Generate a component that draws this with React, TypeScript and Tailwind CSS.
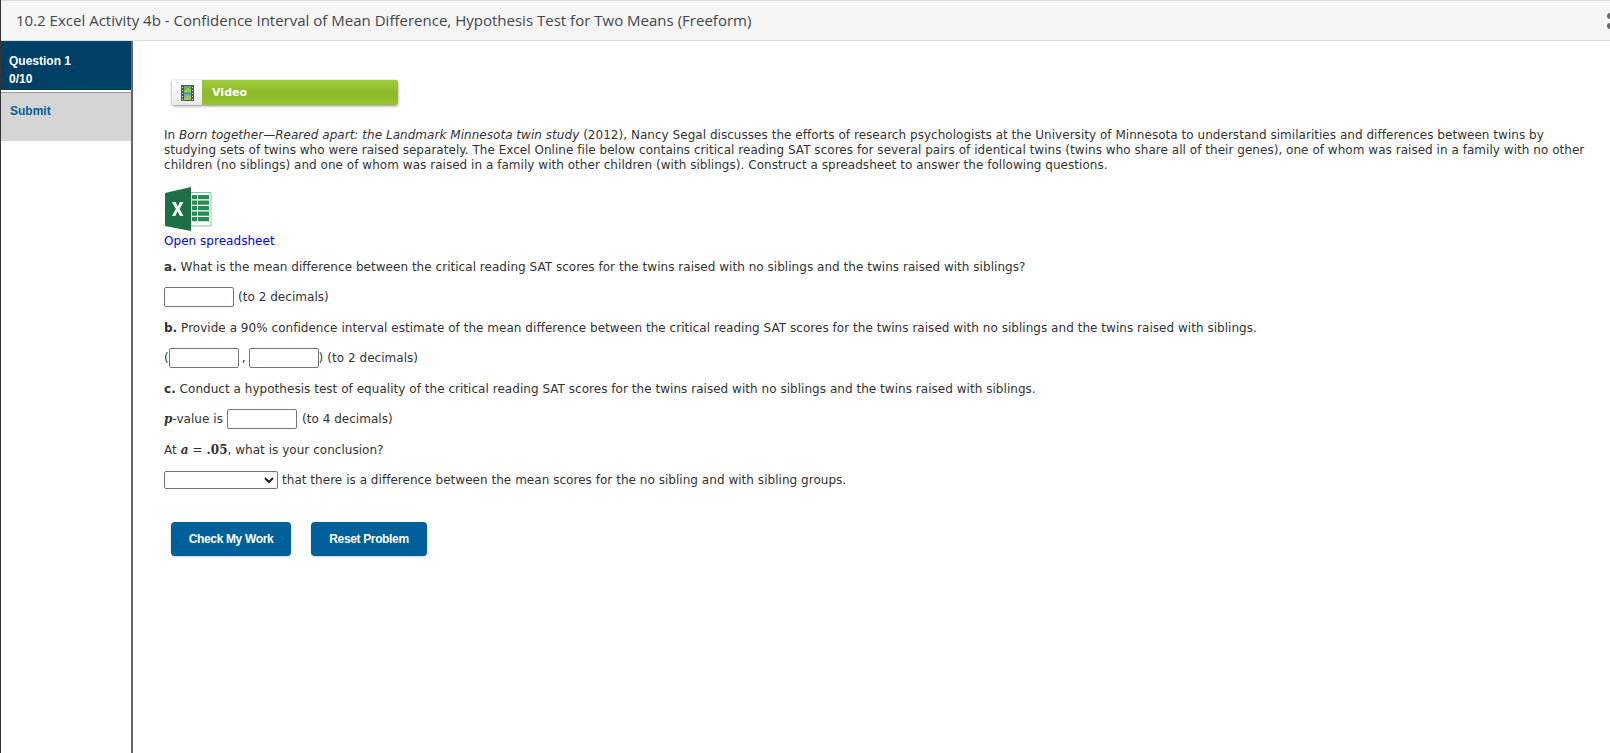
export default function App() {
  const body = "font-['DejaVu_Sans',sans-serif] text-[12px] leading-[15px] tracking-[0.035px] text-[#333]";
  const inputBox = "inline-block w-[70px] h-[20px] bg-white border border-[#767676] rounded-[2px] align-middle";
  const math = "font-['DejaVu_Serif',serif] font-bold italic text-[12px]";
  return (
    <div className="h-[753px] w-[1610px] overflow-hidden bg-white flex flex-col border-l border-[#333]">
      <div className="h-[41px] shrink-0 flex items-center justify-between bg-[#f6f6f6] border-t border-b border-[#dddddd] pl-[15px] font-['Open_Sans',sans-serif] text-[15px] tracking-[0.01px] text-[#43464d]">
        <span>10.2 Excel Activity 4b - Confidence Interval of Mean Difference, Hypothesis Test for Two Means (Freeform)</span>
        <div className="flex flex-col gap-[4px] w-[3px] overflow-hidden">
          <div className="w-[6px] h-[6px] rounded-full bg-[#6b6b6b]" />
          <div className="w-[6px] h-[6px] rounded-full bg-[#6b6b6b]" />
        </div>
      </div>
      <div className="flex flex-1 min-h-0">
        <aside className="w-[132px] shrink-0 border-r-2 border-[#666] font-['Liberation_Sans',sans-serif] font-bold text-[12px]">
          <div className="h-[49px] bg-[#003f66] text-white pl-[8px] pt-[11px] leading-[18px]">
            <div>Question 1</div>
            <div>0/10</div>
          </div>
          <div className="h-[2px] bg-white" />
          <div className="h-[49px] bg-[#d5d5d5] border-t border-[#999] pl-[9px] pt-[9px] text-[#00609a] leading-[18px]">Submit</div>
        </aside>
        <main className={`flex-1 min-w-0 pl-[31px] pt-[39px] ${body}`}>
          <div className="ml-[8px] w-[226px] h-[25px] flex rounded-[2px] shadow-[0_1px_3px_rgba(0,0,0,0.45)] overflow-hidden">
            <div className="w-[30px] bg-gradient-to-b from-white to-[#e9e9e9] flex items-center justify-center">
              <svg width="13" height="16" viewBox="0 0 13 16">
                <rect width="13" height="16" fill="#55585a" />
                <rect x="3" y="1" width="7" height="6.500" fill="#58b368" />
                <rect x="3" y="8.500" width="7" height="6.500" fill="#5bb0d5" />
                <path d="M3 6l4-3 3 2v2.500H3zM3 13l4-3 3 2v3H3z" fill="#9ccc4a" />
                <path d="M1 2h1v1H1zM1 5h1v1H1zM1 8h1v1H1zM1 11h1v1H1zM1 14h1v1H1zM11 2h1v1h-1zM11 5h1v1h-1zM11 8h1v1h-1zM11 11h1v1h-1zM11 14h1v1h-1z" fill="#dddddd" />
              </svg>
            </div>
            <div className="flex-1 bg-[linear-gradient(#a0cc3c,#8eb927_55%,#97c42d)] text-white font-bold text-[11px] pl-[10px] leading-[26px]">Video</div>
          </div>
          <p className="mt-[23px] w-[1428px]">
            In <i>Born together—Reared apart: the Landmark Minnesota twin study</i> (2012), Nancy Segal discusses the efforts of research psychologists at the University of Minnesota to understand similarities and differences between twins by studying sets of twins who were raised separately. The Excel Online file below contains critical reading SAT scores for several pairs of identical twins (twins who share all of their genes), one of whom was raised in a family with no other children (no siblings) and one of whom was raised in a family with other children (with siblings). Construct a spreadsheet to answer the following questions.
          </p>
          <svg className="mt-[14px] block" width="48" height="44" viewBox="0 0 48 44">
            <path d="M27 5.500h20v33.500H27z" fill="#fff" stroke="#8dbfa3" strokeWidth="1" />
            <path d="M28 8h5v4.300h-5zM34 8h11v4.300H34zM28 13.500h5v4.300h-5zM34 13.500h11v4.300H34zM28 19h5v4.300h-5zM34 19h11v4.300H34zM28 24.500h5v4.300h-5zM34 24.500h11v4.300H34zM28 30h5v4.300h-5zM34 30h11v4.300H34z" fill="#2a8a55" />
            <path d="M1 6L27 0v44L1 39z" fill="#1f6f45" />
            <path d="M8 15h3.600l2.100 4.600L16 15h3.400l-3.800 7 3.900 7h-3.600l-2.300-4.900L11.300 29H8l3.900-7z" fill="#fff" />
          </svg>
          <a className="block mt-[3px] text-[#0000ee]">Open spreadsheet</a>
          <p className="mt-[11px]"><b>a.</b> What is the mean difference between the critical reading SAT scores for the twins raised with no siblings and the twins raised with siblings?</p>
          <div className="mt-[12px] flex items-center h-[20px]">
            <span className={inputBox} />
            <span className="ml-[4px]">(to 2 decimals)</span>
          </div>
          <p className="mt-[14px]"><b>b.</b> Provide a 90% confidence interval estimate of the mean difference between the critical reading SAT scores for the twins raised with no siblings and the twins raised with siblings.</p>
          <div className="mt-[12px] flex items-center h-[20px]">
            <span>(</span>
            <span className={inputBox} />
            <span className="mx-[3px]">,</span>
            <span className={inputBox} />
            <span>)</span>
            <span className="ml-[4px]">(to 2 decimals)</span>
          </div>
          <p className="mt-[14px]"><b>c.</b> Conduct a hypothesis test of equality of the critical reading SAT scores for the twins raised with no siblings and the twins raised with siblings.</p>
          <div className="mt-[12px] flex items-center h-[20px]">
            <i className={math}>p</i>
            <span>-value is</span>
            <span className={`${inputBox} ml-[4px]`} />
            <span className="ml-[5px]">(to 4 decimals)</span>
          </div>
          <p className="mt-[14px]">At <i className={math}>a</i><span className="font-['DejaVu_Serif',serif] text-[12px] ml-[4px]">=</span><span className="font-['DejaVu_Serif',serif] font-bold text-[12px] ml-[4px]">.05</span>, what is your conclusion?</p>
          <div className="mt-[13px] flex items-center h-[18px]">
            <span className="relative w-[114px] h-[18px] bg-white border border-[#767676] rounded-[2px]">
              <svg className="absolute right-[3px] top-[4px]" width="10" height="8" viewBox="0 0 10 8"><path d="M1 2l4 4 4-4" fill="none" stroke="#222" strokeWidth="2" /></svg>
            </span>
            <span className="ml-[4px]">that there is a difference between the mean scores for the no sibling and with sibling groups.</span>
          </div>
          <div className="mt-[33px] ml-[7px] flex gap-[20px] font-['Liberation_Sans',sans-serif] font-bold text-[12px] tracking-[-0.35px] text-white">
            <button className="w-[120px] h-[34px] rounded-[4px] bg-[#00609a] shadow-[0_1px_2px_rgba(0,0,0,0.2)]">Check My Work</button>
            <button className="w-[116px] h-[34px] rounded-[4px] bg-[#00609a] shadow-[0_1px_2px_rgba(0,0,0,0.2)]">Reset Problem</button>
          </div>
        </main>
      </div>
    </div>
  );
}
